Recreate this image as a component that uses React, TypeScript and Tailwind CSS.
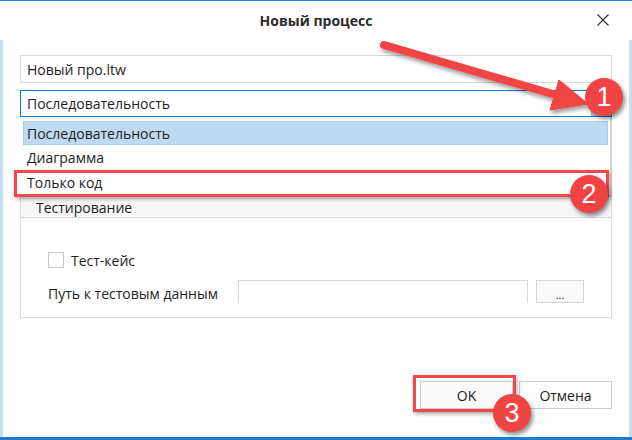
import React from "react";

const RED = "#f04444";

function Badge({ n, className }: { n: string; className: string }) {
  return (
    <div
      className={`absolute flex h-[38px] w-[38px] items-center justify-center rounded-full bg-[#f04444] text-[27px] leading-none text-white shadow-[2px_3px_4px_rgba(0,0,0,0.45)] ${className}`}
      style={{ fontFamily: '"Liberation Sans", Arial, sans-serif' }}
    >
      {n}
    </div>
  );
}

function Arrow() {
  return (
    <svg
      aria-hidden
      className="pointer-events-none absolute left-0 top-0"
      width="632"
      height="440"
      viewBox="0 0 632 440"
    >
      <defs>
        <filter id="arrow-shadow" x="-10%" y="-50%" width="120%" height="200%">
          <feDropShadow dx="1.5" dy="3" stdDeviation="2" floodColor="#000" floodOpacity="0.4" />
        </filter>
      </defs>
      <g filter="url(#arrow-shadow)" fill={RED} stroke={RED}>
        <line x1="384" y1="44" x2="558" y2="94.5" strokeWidth="8" strokeLinecap="round" />
        <polygon points="588,103 559,79 550,109" strokeWidth="1" strokeLinejoin="round" />
      </g>
    </svg>
  );
}

export default function App() {
  return (
    <div
      className="relative flex h-[440px] w-[632px] flex-col overflow-hidden border-t border-[#2b7fd6] bg-white text-[14px] text-[#1e1e1e]"
      style={{ fontFamily: '"Open Sans", "Noto Sans", sans-serif' }}
    >
      {/* Title bar */}
      <header className="relative flex h-[39px] shrink-0 items-center justify-center">
        <span className="font-bold text-[#2b2b2b]">Новый процесс</span>
        <svg
          aria-hidden
          className="absolute right-[23px] top-[13px]"
          width="12"
          height="12"
          viewBox="0 0 12 12"
          stroke="#333"
          strokeWidth="1.2"
        >
          <path d="M0.5 0.5 L11.5 11.5 M11.5 0.5 L0.5 11.5" />
        </svg>
      </header>

      {/* Body */}
      <div className="flex flex-1 flex-col border-x-[3px] border-[#c3ddf3] px-[17px]">
        <div className="mt-[15px] flex h-[28px] items-center border border-[#dadada] px-[6px]">
          Новый про.ltw
        </div>

        <div className="relative mt-[7px]">
          <div className="flex h-[27px] items-center border border-[#0a78d4] pl-[6px]">
            <span className="flex-1">Последовательность</span>
            <span className="h-full w-[20px] bg-[#b4d4ef]" />
          </div>

          {/* Open drop-down list */}
          <div className="absolute left-[1px] right-0 top-full z-10 flex h-[80px] flex-col border-r-2 border-b border-[#d3d3d3] bg-white px-[2px] pt-[4px]">
            <div className="flex h-[24px] items-center border border-[#a9cdee] bg-[#bed9f0] px-[3px]">
              Последовательность
            </div>
            <div className="flex h-[25px] items-center px-[4px]">Диаграмма</div>
            <div className="flex h-[25px] items-center px-[4px]">Только код</div>
          </div>
        </div>

        {/* Tab control */}
        <div className="mt-[80px] flex flex-col">
          <div className="flex h-[21px] items-center border-x border-b border-[#dcdcdc] bg-[#f6f6f6] pl-[15px]">
            Тестирование
          </div>
          <div className="flex h-[100px] flex-col border-x border-b border-[#dcdcdc] pl-[27px] pr-[27px] pt-[34px]">
            <div className="flex h-[16px] items-center gap-[7px]">
              <span className="h-[16px] w-[16px] border border-[#c6c6c6] bg-white" />
              <span>Тест-кейс</span>
            </div>
            <div className="mt-[12px] flex h-[23px] items-center">
              <span className="w-[190px] pt-[4px]">Путь к тестовым данным</span>
              <span className="h-full w-[290px] border-x border-t border-[#d8d8d8]" />
              <span className="ml-[8px] flex h-full w-[48px] items-end justify-center border border-[#d4d4d4] bg-[#fafafa] pb-[2px] text-[11px] leading-none">
                ...
              </span>
            </div>
          </div>
        </div>

        {/* Buttons */}
        <div className="mt-[63px] flex justify-end gap-[6px]">
          <button className="flex h-[28px] w-[93px] items-center justify-center border border-[#cccccc] bg-[#fafafa]">
            OK
          </button>
          <button className="flex h-[28px] w-[93px] items-center justify-center border border-[#cccccc] bg-[#fdfdfd]">
            Отмена
          </button>
        </div>
      </div>
      <div className="h-[3px] shrink-0 bg-[#1c7bd4]" />

      {/* Annotations */}
      <div className="pointer-events-none absolute left-[14px] top-[169px] z-20 h-[27px] w-[595px] border-[3px] border-[#f04848] shadow-[1px_2px_4px_rgba(0,0,0,0.35)]" />
      <div className="pointer-events-none absolute left-[413px] top-[374px] z-20 h-[37px] w-[103px] border-[3px] border-[#f04848] shadow-[1px_2px_4px_rgba(0,0,0,0.35)]" />
      <div className="absolute inset-0 z-30">
        <Arrow />
        <Badge n="1" className="left-[585px] top-[77px]" />
        <Badge n="2" className="left-[570px] top-[174px]" />
        <Badge n="3" className="left-[493px] top-[393px]" />
      </div>
    </div>
  );
}
